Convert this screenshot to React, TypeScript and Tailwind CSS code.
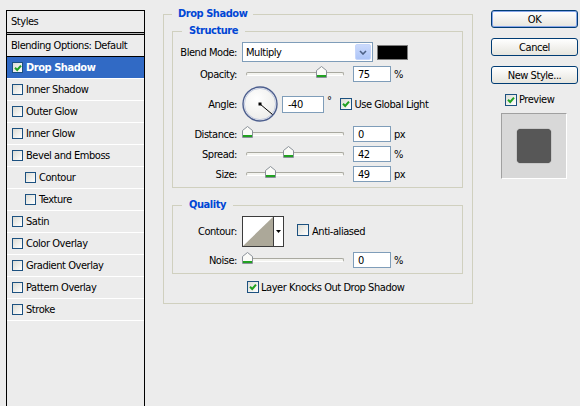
import React from 'react';

// Photoshop "Layer Style" dialog, XP look
const listItems = [
  { label: 'Drop Shadow', checked: true, selected: true },
  { label: 'Inner Shadow' },
  { label: 'Outer Glow' },
  { label: 'Inner Glow' },
  { label: 'Bevel and Emboss' },
  { label: 'Contour', indent: true },
  { label: 'Texture', indent: true },
  { label: 'Satin' },
  { label: 'Color Overlay' },
  { label: 'Gradient Overlay' },
  { label: 'Pattern Overlay' },
  { label: 'Stroke' },
];

const Tick = () => (
  <svg width="8" height="8" viewBox="0 0 8 8">
    <path d="M1 3.8 L3.2 6 L7 1.6" fill="none" stroke="#21a121" strokeWidth="2" />
  </svg>
);

const Check = ({ checked = false, small = false }: { checked?: boolean; small?: boolean }) => (
  <span
    className={
      small
        ? 'inline-flex items-center justify-center shrink-0 w-[11px] h-[11px] border border-[#1c5180] bg-gradient-to-br from-[#dcdcd5] to-white'
        : 'inline-flex items-center justify-center shrink-0 w-[12px] h-[12px] border border-[#1c5180] bg-gradient-to-br from-[#dcdcd5] to-white'
    }
  >
    {checked && <Tick />}
  </span>
);

const Thumb = () => (
  <svg width="11" height="12" viewBox="0 0 11 12">
    <path d="M0.5 11.5 V4.5 L5.5 0.5 L10.5 4.5 V11.5 Z" fill="#fbfbf8" stroke="#8a9199" />
    <rect x="1" y="9" width="9" height="2" fill="#21a121" />
  </svg>
);

const Slider = ({ center }: { center: number }) => (
  <div className="relative ml-[5px] w-[106px] h-full flex items-center">
    <div className="mx-[4px] flex-1 h-[4px] rounded-full border border-[#a9a9a0] border-b-white bg-[#f3f3ef]" />
    <div className="absolute top-1/2 -translate-y-1/2 mt-[-2px] flex" style={{ left: center - 5 }}>
      <Thumb />
    </div>
  </div>
);

const Input = ({ value }: { value: string }) => (
  <div className="w-[38px] h-[16px] border border-[#7f9db9] bg-white pl-[4px] flex items-center leading-none">
    {value}
  </div>
);

const Label = ({ children }: { children: React.ReactNode }) => (
  <div className="w-[64px] shrink-0 text-right">{children}</div>
);

const SliderRow = ({ label, center, value, unit }: { label: string; center: number; value: string; unit: string }) => (
  <div className="flex items-center h-[16px] mt-[4px]">
    <Label>{label}</Label>
    <Slider center={center} />
    <div className="ml-[5px]">
      <Input value={value} />
    </div>
    <span className="ml-[3px]">{unit}</span>
  </div>
);

const LeftPanel = () => (
  <div className="ml-[6px] mt-[10px] w-[139px] h-[420px] shrink-0 border border-black">
    <div className="h-[21px] pl-[4px] flex items-center">Styles</div>
    <div className="h-[3px] bg-[#b4b4b4] border-y border-black" />
    <div className="h-[22px] pl-[4px] flex items-center border-b border-black">Blending Options: Default</div>
    {listItems.map((it) => (
      <div
        key={it.label}
        className={
          it.selected
            ? 'h-[22px] flex items-center gap-[3px] pl-[5px] border-b border-white bg-[#316ac5] text-white font-bold'
            : it.indent
              ? 'h-[22px] flex items-center gap-[3px] pl-[18px] border-b border-white'
              : 'h-[22px] flex items-center gap-[3px] pl-[5px] border-b border-white'
        }
      >
        <Check checked={it.checked} small />
        <span>{it.label}</span>
      </div>
    ))}
  </div>
);

const Dial = () => (
  <svg width="36" height="36" viewBox="0 0 36 36" className="ml-[5px]">
    <defs>
      <radialGradient id="dialFill" cx="40%" cy="35%" r="70%">
        <stop offset="0" stopColor="#ffffff" />
        <stop offset="1" stopColor="#ebebe8" />
      </radialGradient>
    </defs>
    <circle cx="18" cy="18" r="17" fill="url(#dialFill)" stroke="#4c5e8e" strokeWidth="1.4" />
    <circle cx="18" cy="18" r="15.6" fill="none" stroke="#b8c2dc" strokeWidth="0.8" />
    <line x1="18" y1="18" x2="30.5" y2="28.5" stroke="#000" strokeWidth="1" />
    <rect x="16.5" y="16.5" width="3" height="3" fill="#000" />
  </svg>
);

const ContourBox = () => (
  <div className="ml-[5px] w-[42px] h-[31px] border border-[#3c3c3c] bg-white flex">
    <svg width="30" height="29" viewBox="0 0 30 29" className="shrink-0">
      <rect x="0" y="0" width="30" height="29" fill="#ffffff" />
      <polygon points="0,29 30,0 30,29" fill="#aca899" />
    </svg>
    <div className="flex-1 border-l border-[#3c3c3c] flex items-center justify-center">
      <svg width="5" height="3" viewBox="0 0 5 3">
        <polygon points="0,0 5,0 2.5,3" fill="#000" />
      </svg>
    </div>
  </div>
);

const Legend = ({ children, inner = false }: { children: React.ReactNode; inner?: boolean }) => (
  <legend
    className={
      inner
        ? 'ml-[9px] px-[7px] leading-[14px] font-bold text-[#0046d5]'
        : 'px-[6px] leading-[14px] font-bold text-[#0046d5]'
    }
  >
    {children}
  </legend>
);

const Middle = () => (
  <fieldset className="ml-[18px] mt-[7px] w-[310px] h-[297px] shrink-0 border border-[#d0d0bf] pl-[8px] pr-[9px] min-w-0">
    <Legend>Drop Shadow</Legend>

    <fieldset className="mt-[3px] border border-[#d0d0bf] pt-[4px] pb-[5px] min-w-0">
      <Legend inner>Structure</Legend>

      <div className="flex items-center h-[20px]">
        <Label>Blend Mode:</Label>
        <div className="ml-[5px] w-[131px] h-[20px] border border-[#7f9db9] bg-white flex">
          <span className="flex-1 pl-[3px] flex items-center">Multiply</span>
          <div className="w-[16px] my-[1px] mr-[1px] rounded-[2px] border border-[#c6d6fb] bg-gradient-to-b from-[#cbdafc] to-[#adc5f7] flex items-center justify-center">
            <svg width="8" height="5" viewBox="0 0 8 5">
              <path d="M1 1 L4 4 L7 1" fill="none" stroke="#4d6185" strokeWidth="1.6" />
            </svg>
          </div>
        </div>
        <div className="ml-[4px] w-[31px] h-[15px] border border-[#7d7d7d] bg-black" />
      </div>

      <SliderRow label="Opacity:" center={79} value="75" unit="%" />

      <div className="flex items-center h-[36px] mt-[4px]">
        <Label>Angle:</Label>
        <Dial />
        <div className="ml-[4px] h-[17px] w-[42px] border border-[#7f9db9] bg-white pl-[5px] flex items-center">-40</div>
        <span className="ml-[3px] self-start mt-[9px] leading-none">°</span>
        <span className="ml-[8px]">
          <Check checked />
        </span>
        <span className="ml-[3px]">Use Global Light</span>
      </div>

      <SliderRow label="Distance:" center={5} value="0" unit="px" />
      <SliderRow label="Spread:" center={46} value="42" unit="%" />
      <SliderRow label="Size:" center={28} value="49" unit="px" />
    </fieldset>

    <fieldset className="mt-[10px] border border-[#d0d0bf] pt-[4px] pb-[5px] min-w-0">
      <Legend inner>Quality</Legend>
      <div className="flex items-center h-[31px]">
        <Label>Contour:</Label>
        <ContourBox />
        <span className="ml-[13px]">
          <Check />
        </span>
        <span className="ml-[3px]">Anti-aliased</span>
      </div>
      <div className="flex items-center h-[16px] mt-[5px]">
        <Label>Noise:</Label>
        <Slider center={5} />
        <div className="ml-[5px]">
          <Input value="0" />
        </div>
        <span className="ml-[3px]">%</span>
      </div>
    </fieldset>

    <div className="flex items-center h-[14px] mt-[6px] ml-[75px]">
      <Check checked />
      <span className="ml-[2px]">Layer Knocks Out Drop Shadow</span>
    </div>
  </fieldset>
);

const Button = ({ children, primary = false }: { children: React.ReactNode; primary?: boolean }) => (
  <div
    className={
      primary
        ? 'h-[18px] w-[87px] rounded-[3px] border border-[#003c74] bg-gradient-to-b from-white to-[#e6e5de] flex items-center justify-center shadow-[inset_0_0_0_1px_#86a5e8]'
        : 'h-[18px] w-[87px] rounded-[3px] border border-[#003c74] bg-gradient-to-b from-white to-[#e6e5de] flex items-center justify-center'
    }
  >
    {children}
  </div>
);

const RightColumn = () => (
  <div className="ml-[18px] mt-[10px] w-[87px] shrink-0 flex flex-col">
    <div className="flex flex-col gap-[10px]">
      <Button primary>OK</Button>
      <Button>Cancel</Button>
      <Button>New Style...</Button>
    </div>
    <div className="flex items-center h-[13px] mt-[9px] ml-[14px]">
      <Check checked />
      <span className="ml-[2px]">Preview</span>
    </div>
    <div className="mt-[7px] ml-[10px] w-[66px] h-[66px] border border-[#a0a0a0] border-b-white border-r-white bg-[#d8d8d8] flex items-center justify-center">
      <div className="w-[34px] h-[34px] rounded-[4px] bg-[#575757] shadow-[0_0_1px_#333]" />
    </div>
  </div>
);

export default function App() {
  return (
    <div className="w-[580px] h-[406px] overflow-hidden bg-[#ececec] flex items-start text-[11px] leading-[13px] tracking-[-0.45px] text-black font-['DejaVu_Sans_Condensed','DejaVu_Sans',sans-serif]">
      <LeftPanel />
      <Middle />
      <RightColumn />
    </div>
  );
}
